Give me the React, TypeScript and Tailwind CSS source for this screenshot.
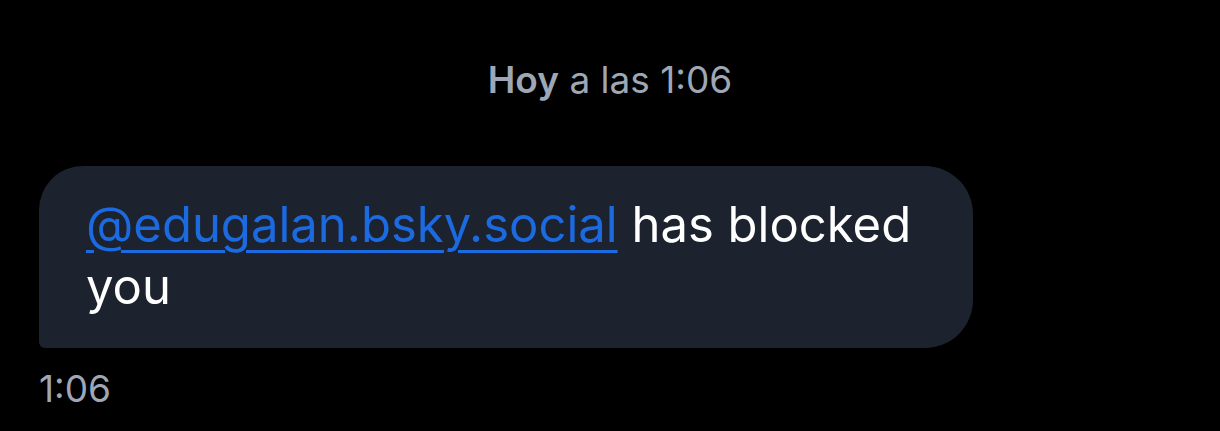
export default function App() {
  return (
    <div
      className="w-[1220px] h-[431px] bg-black flex flex-col"
      style={{ fontFamily: "Inter, 'Noto Sans', sans-serif" }}
    >
      <div className="h-[166px] flex justify-center pt-[57px]">
        <p className="text-[37px] leading-[46px] text-[#9ea7b6]">
          <span className="font-semibold">Hoy</span> a las 1:06
        </p>
      </div>
      <div className="pl-[39px]">
        <div className="w-[934px] h-[182px] bg-[#1c222e] rounded-tl-[44px] rounded-tr-[48px] rounded-br-[48px] rounded-bl-[6px] pl-[47px] pr-[50px] pt-[28px]">
          <p className="text-[49px] leading-[62px] text-white">
            <a className="text-[#1b6ae0] underline underline-offset-[8px] decoration-[3px]">
              @edugalan.bsky.social
            </a>{" "}
            has blocked you
          </p>
        </div>
      </div>
      <div className="pl-[39px] pt-[19px]">
        <p className="text-[37px] leading-[44px] text-[#9ea7b6]">1:06</p>
      </div>
    </div>
  );
}
